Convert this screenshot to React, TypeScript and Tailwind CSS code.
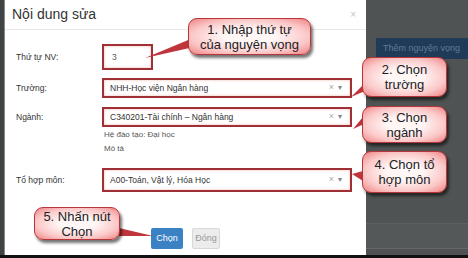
import React from "react";

const Callout = ({ className, lines }: { className: string; lines: string[] }) => (
  <div
    className={`absolute flex flex-col items-center justify-center rounded-[9px] border-[1.5px] border-[#b8353a] bg-[radial-gradient(ellipse_at_center,#fff6f6_30%,#fbc8c8_68%,#ee8282_100%)] text-[13px] leading-[15px] text-[#222] shadow-[2px_3px_3px_rgba(0,0,0,0.55)] ${className}`}
  >
    {lines.map((l) => (
      <span key={l}>{l}</span>
    ))}
  </div>
);

const Select = ({ value, className }: { value: string; className: string }) => (
  <div
    className={`flex w-[250px] items-center border-2 border-[#9e3036] bg-white pl-[6px] pr-[8px] shadow-[inset_0_0_3px_#f2b8b8] ${className}`}
  >
    <span className="flex-1 text-[8.5px] text-[#333]">{value}</span>
    <span className="text-[9px] text-[#aaa]">×</span>
    <span className="ml-[4px] text-[8px] text-[#888]">▾</span>
  </div>
);

const Row = ({ label, children, className }: { label: string; children: React.ReactNode; className?: string }) => (
  <div className={`flex items-center ${className ?? ""}`}>
    <span className="w-[86px] text-[8.5px] text-[#333]">{label}</span>
    {children}
  </div>
);

export default function App() {
  return (
    <div className="relative h-[258px] w-[468px] overflow-hidden bg-[#4f5353] font-['Liberation_Sans',Arial,sans-serif]">
      <div className="flex h-[255px]">
        <div className="w-[4px] bg-[#3f4343]" />
        <div className="flex w-[362px] flex-col border-l border-[#888] bg-white">
          <div className="flex h-[30px] items-center justify-between border-b border-[#e8e8e8] pl-[7px] pr-[10px]">
            <span className="text-[14px] text-[#333]">Nội dung sửa</span>
            <span className="text-[10px] text-[#c4c4c4]">×</span>
          </div>
          <div className="flex flex-col pl-[11px]">
            <Row label="Thứ tự NV:" className="mt-[14px]">
              <div className="flex h-[26px] w-[51px] items-center border-2 border-[#9e3036] pl-[8px] text-[8.5px] text-[#555] shadow-[inset_0_0_3px_#f2b8b8]">
                3
              </div>
            </Row>
            <Row label="Trường:" className="mt-[8px]">
              <Select value="NHH-Học viện Ngân hàng" className="h-[20px]" />
            </Row>
            <Row label="Ngành:" className="mt-[9px]">
              <Select value="C340201-Tài chính – Ngân hàng" className="h-[20px]" />
            </Row>
            <div className="ml-[88px] mt-[1px] flex flex-col text-[8px] leading-[14px] text-[#555]">
              <span>Hệ đào tạo: Đại học</span>
              <span>Mô tả</span>
            </div>
            <Row label="Tổ hợp môn:" className="mt-[12px]">
              <Select value="A00-Toán, Vật lý, Hóa Học" className="h-[24px]" />
            </Row>
          </div>
          <div className="mt-[36px] flex gap-[9px] pl-[146px]">
            <div className="flex h-[21px] w-[32px] items-center justify-center rounded-[2px] bg-[#3a82c4] text-[9px] text-white">
              Chọn
            </div>
            <div className="flex h-[21px] w-[28px] items-center justify-center rounded-[2px] border border-[#d8d8d8] bg-[#ececec] text-[9px] text-[#999]">
              Đóng
            </div>
          </div>
        </div>
        <div className="flex flex-1 flex-col overflow-hidden">
          <div className="ml-[10px] mt-[38px] flex h-[21px] items-center whitespace-nowrap bg-[#1f3b57] pl-[7px] text-[9px] text-[#5f7c97]">
            Thêm nguyện vọng
          </div>
          <div className="flex-1" />
          <div className="h-[25px] border-t border-[#5c6060] bg-[#545858]" />
          <div className="h-[7px] border-t border-[#666]" />
        </div>
      </div>
      <div className="h-[3px] bg-[#111]" />

      <svg className="absolute left-0 top-0" width="468" height="258">
        <polygon points="145,58 193,38 194,47" fill="#c0353c" />
        <polygon points="351,97 364,84 365,91" fill="#c0353c" />
        <polygon points="353,129 363,117 364,124" fill="#c0353c" />
        <polygon points="352,174 363,171 363,181" fill="#c0353c" />
        <polygon points="153,236 119,228 119,236" fill="#c0353c" />
      </svg>

      <Callout className="left-[188px] top-[18px] h-[37px] w-[123px]" lines={["1. Nhập thứ tự", "của nguyện vọng"]} />
      <Callout className="left-[362px] top-[57px] h-[40px] w-[85px]" lines={["2. Chọn", "trường"]} />
      <Callout className="left-[362px] top-[106px] h-[37px] w-[85px]" lines={["3. Chọn", "ngành"]} />
      <Callout className="left-[362px] top-[151px] h-[42px] w-[85px]" lines={["4. Chọn tổ", "hợp môn"]} />
      <Callout className="left-[34px] top-[207px] h-[33px] w-[86px]" lines={["5. Nhấn nút", "Chọn"]} />
    </div>
  );
}
